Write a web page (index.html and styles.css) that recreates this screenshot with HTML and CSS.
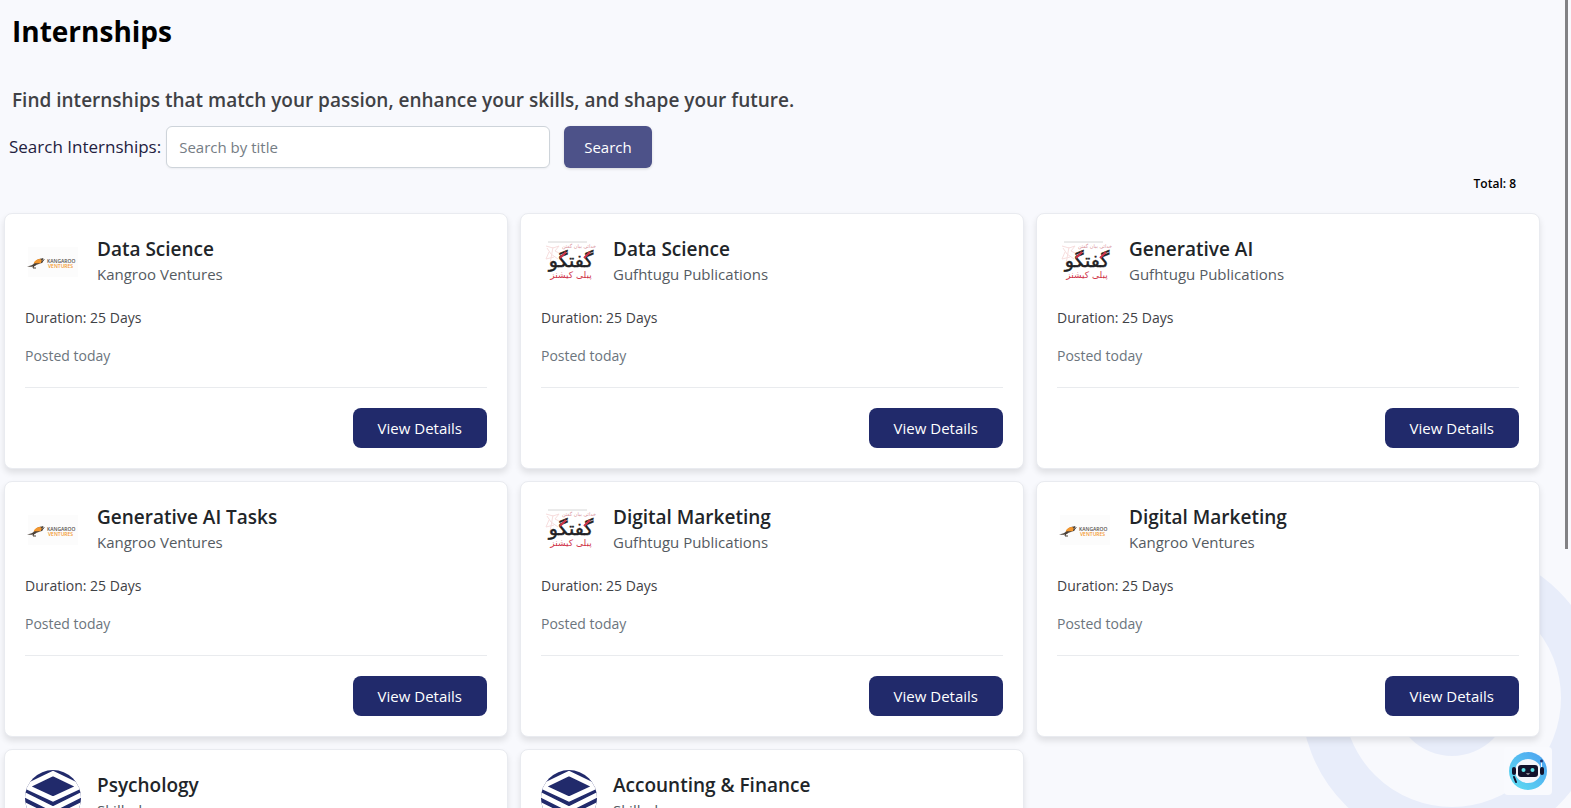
FILE: index.html
```html
<!DOCTYPE html>
<html lang="en">
  <head>
    <meta charset="UTF-8">
    <meta name="viewport" content="width=device-width, initial-scale=1.0">
    <title>Internships</title>
    <link rel="stylesheet" href="styles.css">
  </head>
  <body>
    <svg class="bg-rings" viewBox="0 0 304 304" aria-hidden="true">
      <circle cx="152" cy="152" r="130" fill="none" stroke="#e8edfa" stroke-width="42"/>
      <circle cx="152" cy="152" r="58" fill="#e8edfa"/>
    </svg>

    <main class="page">
      <h1>Internships</h1>
      <p class="tagline">Find internships that match your passion, enhance your skills, and shape your future.</p>

      <form class="search-form">
        <label for="search">Search Internships:</label>
        <input type="text" id="search" placeholder="Search by title">
        <button type="submit" class="search-btn">Search</button>
      </form>
      <p class="total">Total: 8</p>

      <!-- Each company logo is drawn once and reused by id in the other cards -->
      <section class="card-grid">
        <article class="card">
          <div class="card-header">
            <svg class="logo" aria-hidden="true">
              <g id="logo-kangaroo">
                <rect x="3" y="13" width="50" height="30" fill="#fcfcfc"/>
                <path d="M2 33C5 31 7 32 9 29.500C11 26 15 23.500 18 25L17 29C14 30 12 30 10 32C7 33.500 5 32 2 33Z" fill="#4a4038"/>
                <path d="M8.500 29.500C10 25.500 14 24 17 25.500L16 29C13 29.500 11 29 8.500 29.500Z" fill="#f2962e"/>
                <path d="M16 26L18 24.500L19 25.500L16.500 29M9 31L8 34H11" fill="none" stroke="#4a4038" stroke-width="1"/>
                <text x="22" y="29" font-size="5" fill="#55504c" class="logo-latin">KANGAROO</text>
                <text x="23" y="34" font-size="5" fill="#f2962e" class="logo-latin">VENTURES</text>
              </g>
            </svg>
            <div>
              <h2>Data Science</h2>
              <p class="company">Kangroo Ventures</p>
            </div>
          </div>
          <p class="duration">Duration: 25 Days</p>
          <p class="posted">Posted today</p>
          <div class="card-footer">
            <button type="button" class="details-btn">View Details</button>
          </div>
        </article>

        <article class="card">
          <div class="card-header">
            <svg class="logo" aria-hidden="true">
              <g id="logo-gufhtugu">
                <path d="M7 8H46" stroke="#d6d6d6" stroke-width="1"/>
                <path d="M5 12L12 14L18 12L14 17L20 20M6 14L10 20L17 25M8 18L5 25L13 23M12 13L9 30" fill="none" stroke="#f7dede" stroke-width="1"/>
                <text x="38" y="14" font-size="5" text-anchor="middle" fill="#d9939b" class="logo-urdu">خدائی بیان گفتن</text>
                <text x="30" y="33" font-size="19" text-anchor="middle" fill="#1f1f24" stroke="#1f1f24" stroke-width="0.500" class="logo-urdu">گفتگو</text>
                <path d="M19 24L25 18M43 24L49 18" stroke="#cf3347" stroke-width="2"/>
                <text x="30" y="44" font-size="9" text-anchor="middle" fill="#cf3347" class="logo-urdu">پبلی کیشنز</text>
              </g>
            </svg>
            <div>
              <h2>Data Science</h2>
              <p class="company">Gufhtugu Publications</p>
            </div>
          </div>
          <p class="duration">Duration: 25 Days</p>
          <p class="posted">Posted today</p>
          <div class="card-footer">
            <button type="button" class="details-btn">View Details</button>
          </div>
        </article>

        <article class="card">
          <div class="card-header">
            <svg class="logo" aria-hidden="true"><use href="#logo-gufhtugu"/></svg>
            <div>
              <h2>Generative AI</h2>
              <p class="company">Gufhtugu Publications</p>
            </div>
          </div>
          <p class="duration">Duration: 25 Days</p>
          <p class="posted">Posted today</p>
          <div class="card-footer">
            <button type="button" class="details-btn">View Details</button>
          </div>
        </article>

        <article class="card">
          <div class="card-header">
            <svg class="logo" aria-hidden="true"><use href="#logo-kangaroo"/></svg>
            <div>
              <h2>Generative AI Tasks</h2>
              <p class="company">Kangroo Ventures</p>
            </div>
          </div>
          <p class="duration">Duration: 25 Days</p>
          <p class="posted">Posted today</p>
          <div class="card-footer">
            <button type="button" class="details-btn">View Details</button>
          </div>
        </article>

        <article class="card">
          <div class="card-header">
            <svg class="logo" aria-hidden="true"><use href="#logo-gufhtugu"/></svg>
            <div>
              <h2>Digital Marketing</h2>
              <p class="company">Gufhtugu Publications</p>
            </div>
          </div>
          <p class="duration">Duration: 25 Days</p>
          <p class="posted">Posted today</p>
          <div class="card-footer">
            <button type="button" class="details-btn">View Details</button>
          </div>
        </article>

        <article class="card">
          <div class="card-header">
            <svg class="logo" aria-hidden="true"><use href="#logo-kangaroo"/></svg>
            <div>
              <h2>Digital Marketing</h2>
              <p class="company">Kangroo Ventures</p>
            </div>
          </div>
          <p class="duration">Duration: 25 Days</p>
          <p class="posted">Posted today</p>
          <div class="card-footer">
            <button type="button" class="details-btn">View Details</button>
          </div>
        </article>

        <article class="card">
          <div class="card-header">
            <svg class="logo logo-round" aria-hidden="true">
              <g id="logo-skilled">
                <rect width="56" height="56" fill="#212a6b"/>
                <path d="M28 3.500L55 16.500L28 29L1 16.500Z" fill="none" stroke="#fff" stroke-width="5"/>
                <path d="M-2 24L28 39L58 24M-2 34L28 49L58 34" fill="none" stroke="#fff" stroke-width="5"/>
              </g>
            </svg>
            <div>
              <h2>Psychology</h2>
              <p class="company">Skilled</p>
            </div>
          </div>
          <p class="duration">Duration: 25 Days</p>
          <p class="posted">Posted today</p>
          <div class="card-footer">
            <button type="button" class="details-btn">View Details</button>
          </div>
        </article>

        <article class="card">
          <div class="card-header">
            <svg class="logo logo-round" aria-hidden="true"><use href="#logo-skilled"/></svg>
            <div>
              <h2>Accounting &amp; Finance</h2>
              <p class="company">Skilled</p>
            </div>
          </div>
          <p class="duration">Duration: 25 Days</p>
          <p class="posted">Posted today</p>
          <div class="card-footer">
            <button type="button" class="details-btn">View Details</button>
          </div>
        </article>
      </section>
    </main>

    <div class="scroll-thumb"></div>

    <button type="button" class="chat-btn" aria-label="Open chat">
      <svg viewBox="0 0 48 48">
        <defs>
          <linearGradient id="bot-ring" x1="0" y1="1" x2="1" y2="0">
            <stop offset="0" stop-color="#5fe0f2"/>
            <stop offset="1" stop-color="#4a9df0"/>
          </linearGradient>
        </defs>
        <circle cx="24" cy="24" r="19" fill="url(#bot-ring)"/>
        <ellipse cx="24" cy="24" rx="13" ry="12" fill="#f4f6fc"/>
        <rect x="8" y="20" width="4" height="8" rx="2" fill="#12122c"/>
        <rect x="36" y="20" width="4" height="8" rx="2" fill="#12122c"/>
        <rect x="14" y="18" width="20" height="12" rx="3" fill="#12122c"/>
        <circle cx="19.500" cy="23" r="2" fill="#5fe3ea"/>
        <circle cx="28.500" cy="23" r="2" fill="#5fe3ea"/>
        <path d="M22 26.500Q24 28.500 26 26.500Z" fill="#fff"/>
        <path d="M37.500 14V20" stroke="#f4f6fc" stroke-width="1"/>
        <circle cx="37.500" cy="14" r="1.500" fill="#1d3273"/>
        <path d="M10 30L12 35" stroke="#12122c" stroke-width="2" stroke-linecap="round"/>
      </svg>
    </button>
  </body>
</html>
```
FILE: styles.css
```css
* {
    box-sizing: border-box;
    margin: 0;
    padding: 0;
}

body {
    font-family: "Segoe UI", "Open Sans", "Noto Sans", sans-serif;
    font-size: 15px;
    line-height: 24px;
    color: #212529;
    background-color: #f8f9fd;
    height: 100vh;
    overflow: hidden;
    position: relative;
}

button, input {
    font: inherit;
}

.logo-latin {
    font-family: "Open Sans", sans-serif;
    font-weight: 600;
}

.logo-urdu {
    font-family: "DejaVu Sans", sans-serif;
}

/* Decorative rings behind the cards */
.bg-rings {
    position: absolute;
    right: -33px;
    bottom: -42px;
    width: 304px;
    height: 304px;
}

.page {
    position: relative;
    padding: 7px 31px 20px 4px;
}

h1 {
    font-size: 28px;
    line-height: 48px;
    font-weight: 700;
    color: #000;
    padding-left: 8px;
}

.tagline {
    margin-top: 29px;
    padding-left: 8px;
    font-size: 19px;
    line-height: 32px;
    font-weight: 600;
    color: #404145;
}

/* Search */
.search-form {
    display: flex;
    align-items: center;
    margin-top: 10px;
    padding-left: 5px;
}

.search-form label {
    font-size: 17px;
    margin-right: 5px;
    color: #23213f;
}

.search-form input {
    width: 384px;
    height: 42px;
    padding: 0 12px;
    border: 1px solid #ced4da;
    border-radius: 6px;
    background-color: #fff;
    box-shadow: 0 1px 2px rgba(0, 0, 0, 0.05);
}

.search-form input::placeholder {
    color: #757d85;
    opacity: 1;
}

.search-btn {
    height: 42px;
    margin-left: 14px;
    padding: 0 20px;
    border: none;
    border-radius: 6px;
    background-color: #4d5289;
    color: #fff;
    box-shadow: 0 1px 3px rgba(0, 0, 0, 0.15);
    cursor: pointer;
}

.total {
    margin-top: 6px;
    padding-right: 24px;
    text-align: right;
    font-size: 12px;
    line-height: 20px;
    font-weight: 600;
    color: #000;
}

/* Cards */
.card-grid {
    display: grid;
    grid-template-columns: repeat(3, 1fr);
    gap: 12px;
    margin-top: 19px;
}

.card {
    padding: 20px;
    border: 1px solid #e9ebf0;
    border-radius: 8px;
    background-color: #fff;
    box-shadow: 0 4px 6px rgba(0, 0, 0, 0.1);
}

.card-header {
    display: flex;
    align-items: center;
    gap: 16px;
    margin-bottom: 16px;
}

.logo {
    width: 56px;
    height: 56px;
    flex-shrink: 0;
}

.logo-round {
    border-radius: 50%;
}

.card h2 {
    font-size: 19px;
    line-height: 26px;
    font-weight: 600;
    color: #212529;
}

.company {
    padding-bottom: 2px;
    color: #555b62;
}

.duration {
    font-size: 14px;
    color: #3f4246;
    margin-bottom: 14px;
}

.posted {
    font-size: 14px;
    color: #6c757d;
}

.card-footer {
    display: flex;
    justify-content: flex-end;
    margin-top: 19px;
    padding-top: 20px;
    border-top: 1px solid #e9ebee;
}

.details-btn {
    height: 40px;
    padding: 0 25px;
    border: none;
    border-radius: 8px;
    background-color: #212a6b;
    color: #fff;
    cursor: pointer;
}

.scroll-thumb {
    position: absolute;
    top: 0;
    right: 3px;
    width: 3px;
    height: 68vh;
    background-color: #828285;
}

/* Chat assistant */
.chat-btn {
    position: absolute;
    right: 19px;
    bottom: 13px;
    width: 48px;
    height: 48px;
    border: none;
    border-radius: 4px;
    background-color: #f9fafe;
    cursor: pointer;
}

.chat-btn svg {
    display: block;
    width: 48px;
    height: 48px;
}
```
